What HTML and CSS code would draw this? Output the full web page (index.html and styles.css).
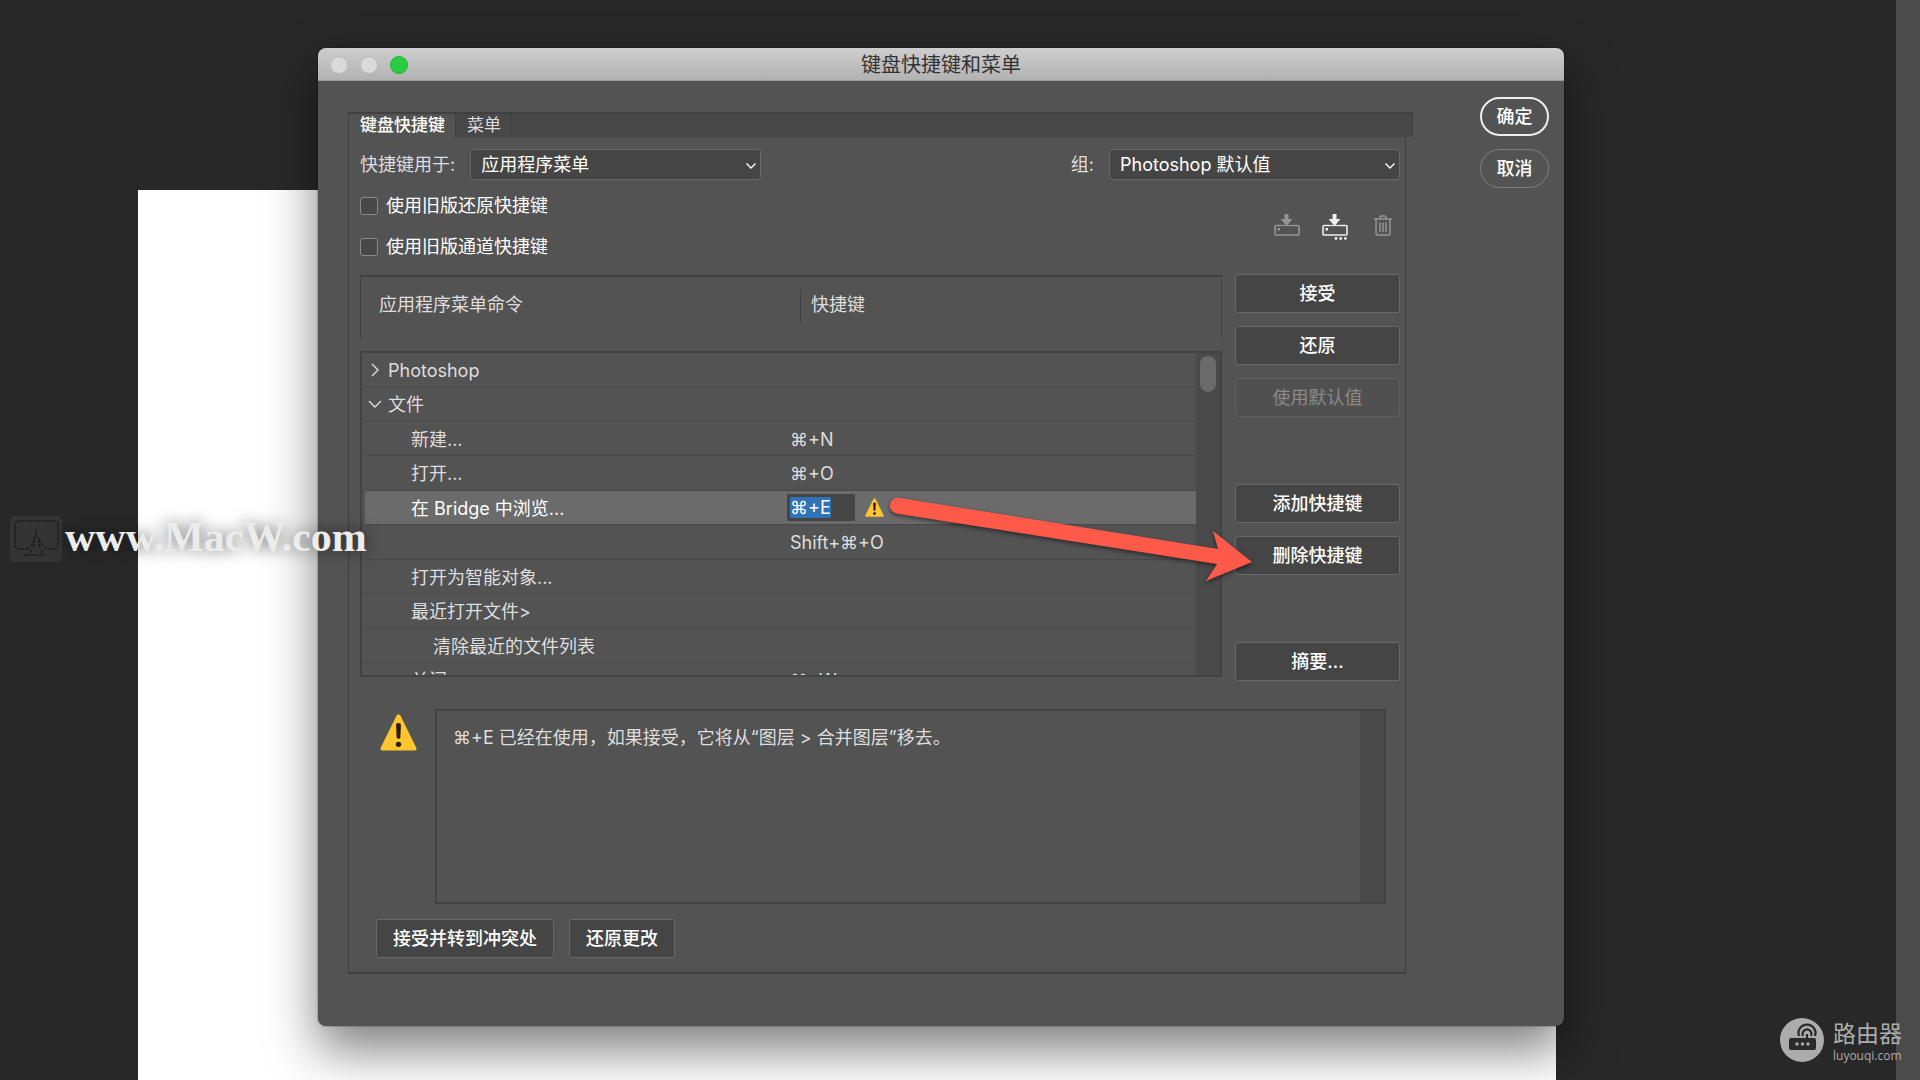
FILE: index.html
```html
<!DOCTYPE html>
<html lang="zh-CN">
<head>
<meta charset="utf-8">
<title>键盘快捷键和菜单</title>
<link rel="stylesheet" href="styles.css">
</head>
<body>
<svg class="defs" width="0" height="0" aria-hidden="true">
  <symbol id="warn" viewBox="0 0 36 36">
    <path d="M18 .5c.9 0 1.600.5 2 1.300l15.300 31c.700 1.500-.1 2.700-1.700 2.700H2.400C.8 35.500 0 34.300.700 32.800L16 1.800c.4-.8 1.100-1.300 2-1.300z" fill="#fdc62f"/>
    <path d="M15.600 10.500q0-1.800 2.400-1.800t2.400 1.800l-.6 12q-.1 1.700-1.800 1.700t-1.800-1.700z" fill="#2b1d00"/>
    <circle cx="18" cy="29.500" r="2.600" fill="#2b1d00"/>
  </symbol>
  <symbol id="down" viewBox="0 0 12 12"><path d="M1.500 3.500 6 8l4.500-4.500" fill="none" stroke="currentColor" stroke-width="1.400"/></symbol>
  <symbol id="fold" viewBox="0 0 14 14"><path d="M1 4l6 6 6-6" fill="none" stroke="currentColor" stroke-width="1.400"/></symbol>
  <symbol id="drive" viewBox="0 0 26 26">
    <path d="M10.500 0h4v5h4L12.500 12 6.500 5h4z" fill="currentColor"/>
    <path d="M7 11.500H2q-1 0-1 1V20q0 1 1 1h22q1 0 1-1v-7.500q0-1-1-1h-6" fill="none" stroke="currentColor" stroke-width="1.600"/>
    <path d="M7 11.500h11" stroke="currentColor" stroke-width="1.200"/>
    <rect x="3.500" y="14" width="2.500" height="2.500" fill="currentColor"/>
  </symbol>
</svg>

<main class="workspace">
  <div class="canvas"></div>
  <div class="rail"></div>

  <section class="dialog" aria-labelledby="title">
    <header class="titlebar">
      <div class="lights"><i class="light"></i><i class="light"></i><i class="light light-on"></i></div>
      <h1 id="title">键盘快捷键和菜单</h1>
    </header>

    <div class="body">
      <div class="panel">
        <nav class="tabs">
          <button class="tab tab-active">键盘快捷键</button><button class="tab">菜单</button>
        </nav>

        <div class="content">
          <div class="sources">
            <label for="scope">快捷键用于:</label>
            <div class="picker"><select id="scope"><option>应用程序菜单</option></select><svg><use href="#down"/></svg></div>
            <label class="set-label" for="set">组:</label>
            <div class="picker"><select id="set"><option>Photoshop 默认值</option></select><svg><use href="#down"/></svg></div>
          </div>

          <div class="options">
            <div class="checks">
              <label><input type="checkbox">使用旧版还原快捷键</label>
              <label><input type="checkbox">使用旧版通道快捷键</label>
            </div>
            <div class="tools">
              <button class="tool tool-off" aria-label="存储"><svg width="26" height="26"><use href="#drive"/></svg></button>
              <button class="tool" aria-label="存储为"><svg width="26" height="26"><use href="#drive"/><g fill="currentColor"><circle cx="14" cy="24.500" r="1.400"/><circle cx="18.700" cy="24.500" r="1.400"/><circle cx="23.400" cy="24.500" r="1.400"/></g></svg></button>
              <button class="tool tool-off" aria-label="删除"><svg width="26" height="26" fill="none" stroke="currentColor" stroke-width="1.500"><path d="M4 5h18M10 5V3.500Q10 2 11.500 2h3Q16 2 16 3.500V5M6 5v14.500Q6 21 7.500 21h11q1.500 0 1.500-1.500V5M10 8.500v9.500M13 8.500v9.500M16 8.500v9.500"/></svg></button>
            </div>
          </div>

          <div class="editor">
            <div class="lists">
              <div class="list-head"><span>应用程序菜单命令</span><span>快捷键</span></div>
              <div class="list">
                <table>
                  <colgroup><col class="col-name"><col></colgroup>
                  <tbody>
                    <tr><td class="group"><svg class="closed"><use href="#fold"/></svg>Photoshop</td><td></td></tr>
                    <tr><td class="group"><svg><use href="#fold"/></svg>文件</td><td></td></tr>
                    <tr><td class="item">新建...</td><td>⌘+N</td></tr>
                    <tr><td class="item">打开...</td><td>⌘+O</td></tr>
                    <tr class="selected"><td class="item">在 Bridge 中浏览...</td><td><div class="edit"><input id="key" type="text" value="⌘+E" aria-label="快捷键"><svg><use href="#warn"/></svg></div></td></tr>
                    <tr><td></td><td>Shift+⌘+O</td></tr>
                    <tr><td class="item">打开为智能对象...</td><td></td></tr>
                    <tr><td class="item">最近打开文件&gt;</td><td></td></tr>
                    <tr><td class="subitem">清除最近的文件列表</td><td></td></tr>
                    <tr><td class="item">关闭...</td><td>⌘+W</td></tr>
                  </tbody>
                </table>
                <div class="track"><div class="thumb"></div></div>
              </div>
            </div>
            <div class="actions">
              <div class="action-group"><button class="btn">接受</button><button class="btn">还原</button><button class="btn" disabled>使用默认值</button></div>
              <div class="action-group"><button class="btn">添加快捷键</button><button class="btn">删除快捷键</button></div>
              <div class="action-group"><button class="btn">摘要...</button></div>
            </div>
            <svg class="arrow" width="366" height="92" viewBox="0 0 366 92"><path d="M14 7 332 58l-5-18 39 31-46 19 11-17L10 22.500A7.800 7.800 0 0 1 14 7z" fill="#ff5949"/></svg>
          </div>

          <div class="conflict">
            <svg class="alert"><use href="#warn"/></svg>
            <div class="message"><p>⌘+E 已经在使用，如果接受，它将从“图层 &gt; 合并图层”移去。</p><div class="track"></div></div>
          </div>
          <div class="resolve"><button class="btn">接受并转到冲突处</button><button class="btn">还原更改</button></div>
        </div>
      </div>

      <div class="confirm"><button class="pill pill-main">确定</button><button class="pill">取消</button></div>
    </div>
  </section>

  <div class="macw">
    <svg width="52" height="46" fill="none" stroke="#101010"><rect width="52" height="46" rx="4" fill="#666" opacity=".2" stroke="none"/><path d="M18 33H9q-4 0-4-4V9q0-4 4-4h35q4 0 4 4v20q0 4-4 4h-5q-8-2-11-12M18 33q5-4 7-12M26 14v7M24 24v8M29 24v8M21 34v4M32 34v4M14 39h21" stroke-dasharray="3 1"/></svg>
    <span>www.MacW.com</span>
  </div>

  <div class="luyouqi">
    <svg width="44" height="44"><circle cx="22" cy="22" r="22" fill="#acacac"/><rect x="9" y="20" width="27" height="12" rx="2" fill="#2a2a2a"/><g fill="none" stroke="#2a2a2a" stroke-width="2.200"><path d="M19 18a8.500 8.500 0 1 1 16 0M23 18a4.500 4.500 0 1 1 8 0"/><path d="M27 16v5"/></g><g fill="#acacac"><circle cx="17" cy="26" r="1.700"/><circle cx="22.500" cy="26" r="1.700"/><circle cx="28" cy="26" r="1.700"/></g></svg>
    <div><strong>路由器</strong><span>luyouqi.com</span></div>
  </div>
</main>
<script>
  const key = document.getElementById("key");
  key.focus();
  key.select();
</script>
</body>
</html>
```
FILE: styles.css
```css
* { box-sizing: border-box; }

body {
  margin: 0;
  background: #282828;
  color: #dedede;
  font: 18px/26px Inter, "Noto Sans CJK SC", sans-serif;
}

button, input, select { font: inherit; color: inherit; margin: 0; }
h1, p { margin: 0; }
.defs { position: absolute; }

.workspace {
  position: relative;
  display: flex;
  justify-content: space-between;
  min-height: 100vh;
  overflow: hidden;
}
.canvas { flex: 1; margin: 190px 340px 0 138px; background: #fff; }
.rail { width: 24px; background: #4b4b4b; }

/* Dialog window */
.dialog {
  position: absolute;
  top: 48px;
  left: 318px;
  right: 356px;
  border-radius: 8px;
  background: #535353;
  box-shadow: 0 24px 50px rgba(0, 0, 0, .5), 0 0 2px rgba(0, 0, 0, .6);
}
.titlebar {
  display: flex;
  align-items: center;
  height: 33px;
  padding: 1px 12px 0;
  border-bottom: 1px solid #999;
  border-radius: 8px 8px 0 0;
  background: linear-gradient(#cecece, #b2b2b2);
}
.titlebar h1 {
  flex: 1;
  margin-right: 78px;
  text-align: center;
  font-size: 20px;
  font-weight: 400;
  color: #333;
}
.lights { display: flex; gap: 12px; width: 78px; }
.light { width: 18px; height: 18px; border: 1px solid #bbb; border-radius: 50%; background: #dadada; }
.light-on { border-color: #20b436; background: #28cd41; }

.body {
  display: flex;
  align-items: flex-start;
  gap: 74px;
  padding: 31px 15px 52px 30px;
}
.panel { flex: 1; border: solid #404040; border-width: 0 1px 2px; }

.tabs {
  display: flex;
  height: 25px;
  margin-right: -8px;
  border: solid #404040;
  border-width: 2px 1px 0 0;
  background: #484848;
}
.tab {
  padding: 0 10px 0 11px;
  border: 0;
  border-right: 1px solid #404040;
  background: none;
  font-size: 17px;
  line-height: 23px;
}
.tab-active { background: #535353; color: #fff; font-weight: 500; }

.content { padding: 12px 5px 14px 11px; }

.sources { display: flex; align-items: center; }
.picker { position: relative; width: 291px; margin-left: 15px; }
.picker select {
  appearance: none;
  display: block;
  width: 100%;
  height: 31px;
  padding: 0 10px;
  border: 1px solid #686868;
  border-radius: 3px;
  background: #454545;
  color: #fff;
}
.picker svg { position: absolute; right: 4px; top: 11px; width: 12px; height: 12px; color: #fff; pointer-events: none; }
.set-label { margin-left: auto; }

.options { display: flex; justify-content: space-between; align-items: center; padding: 13px 4px 14px 0; }
.checks { display: flex; flex-direction: column; gap: 15px; color: #fff; }
.checks label { display: flex; align-items: center; gap: 8px; }
.checks input {
  appearance: none;
  width: 18px;
  height: 18px;
  border: 1px solid #8a8a8a;
  border-radius: 3px;
  background: #484848;
}
.tools { display: flex; gap: 22px; }
.tool { display: flex; padding: 0; border: 0; background: none; color: #eee; }
.tool-off { color: #959595; }

/* Command list and its buttons */
.editor { position: relative; display: flex; gap: 13px; }
.lists { flex: 1; padding-top: 1px; }
.list-head {
  display: flex;
  height: 64px;
  margin-bottom: 12px;
  padding-top: 13px;
  border: solid #414141;
  border-width: 2px 1px 0;
}
.list-head span { height: 34px; line-height: 30px; }
.list-head span:first-child { width: 440px; padding-left: 18px; border-right: 1px solid #404040; }
.list-head span:last-child { padding-left: 10px; }

.list {
  display: flex;
  height: 326px;
  overflow: hidden;
  border: 2px solid #434343;
}
.list table { flex: 1; table-layout: fixed; border-spacing: 0; padding-left: 3px; }
.col-name { width: 422px; }
.list tr { height: 34px; }
.list tr:nth-child(even) { height: 35px; }
.list td { padding: 2px 0 0 3px; border-bottom: 1px solid #484848; white-space: nowrap; }
.list .group svg { width: 14px; height: 14px; margin-right: 6px; }
.list .closed { transform: rotate(-90deg); }
.list .item { padding-left: 46px; }
.list .subitem { padding-left: 68px; }
.selected { background: #6b6b6b; color: #fff; }
.list .selected td:last-child { padding: 0; }
.edit { display: flex; align-items: center; gap: 10px; }
.edit input { width: 68px; height: 27px; padding: 0 3px; border: 0; background: #454545; color: #fff; outline: 0; }
.edit input::selection { background: #2f72b8; color: #fff; }
.edit svg { width: 19px; height: 19px; }

.track { width: 24px; padding: 3px 4px; background: #4a4a4a; }
.thumb { height: 36px; border-radius: 8px; background: #6b6b6b; }

.actions { display: flex; flex-direction: column; gap: 67px; width: 165px; }
.action-group { display: flex; flex-direction: column; gap: 13px; }
.btn {
  height: 39px;
  padding: 0 15px;
  border: 1px solid #686868;
  border-radius: 3px;
  background: #454545;
  color: #fff;
  font-weight: 500;
}
.btn:disabled { background: #505050; border-color: #606060; color: #8a8a8a; font-weight: 400; }
.arrow { position: absolute; right: 148px; top: 217px; overflow: visible; filter: drop-shadow(0 2px 2px rgba(0, 0, 0, .5)); }

/* Conflict message */
.conflict { display: flex; gap: 18px; margin-top: 28px; padding: 0 14px 0 20px; }
.alert { width: 37px; height: 37px; margin-top: 5px; }
.message { flex: 1; display: flex; height: 195px; border: 2px solid #434343; }
.message p { flex: 1; padding: 14px 16px; }
.resolve { display: flex; gap: 15px; margin-top: 15px; padding-left: 16px; }
.resolve .btn { padding: 0 16px; }

.confirm { display: flex; flex-direction: column; gap: 13px; margin-top: -15px; }
.pill {
  width: 69px;
  height: 39px;
  padding: 0;
  border: 1px solid #808080;
  border-radius: 20px;
  background: none;
  color: #fff;
  font-weight: 500;
}
.pill-main { border: 2px solid #eee; }

/* Site marks */
.macw {
  position: absolute;
  left: 10px;
  top: 516px;
  display: flex;
  align-items: center;
  gap: 3px;
  color: #ececec;
  font: bold 42px/42px "Liberation Serif", serif;
  text-shadow: 0 0 16px rgba(0, 0, 0, .6);
}
.macw span { padding-bottom: 4px; }
.luyouqi {
  position: absolute;
  right: 18px;
  bottom: 16px;
  display: flex;
  align-items: center;
  gap: 9px;
  color: #acacac;
}
.luyouqi strong, .luyouqi span { display: block; font: 12px/16px "Open Sans", sans-serif; }
.luyouqi strong { font: 23px/32px "Noto Sans CJK SC", sans-serif; }
```
